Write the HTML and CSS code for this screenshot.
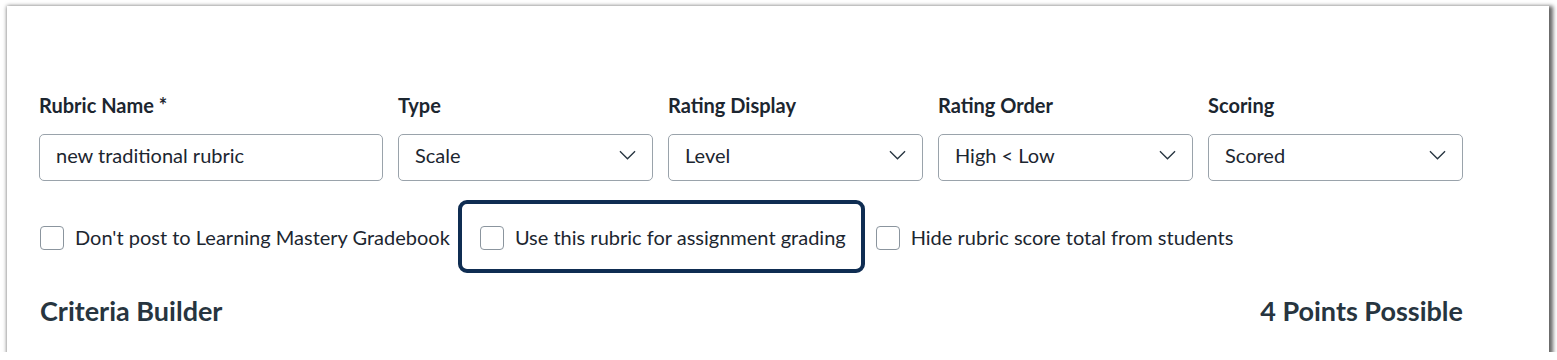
FILE: index.html
```html
<!DOCTYPE html>
<html lang="en">
<head>
    <meta charset="UTF-8">
    <meta name="viewport" content="width=device-width, initial-scale=1.0">
    <title>Rubric Builder</title>
    <link rel="stylesheet" href="styles.css">
</head>
<body>

<div class="card">
    <!-- Rubric settings -->
    <div class="settings-row">
        <div class="field field-name">
            <label for="rubric-name">Rubric Name *</label>
            <input type="text" id="rubric-name" class="text-input" value="new traditional rubric">
        </div>
        <div class="field">
            <label>Type</label>
            <div class="select-box">
                <span>Scale</span>
                <svg class="chevron" viewBox="0 0 18 10"><path d="M1 1l8 8 8-8"/></svg>
            </div>
        </div>
        <div class="field">
            <label>Rating Display</label>
            <div class="select-box">
                <span>Level</span>
                <svg class="chevron" viewBox="0 0 18 10"><path d="M1 1l8 8 8-8"/></svg>
            </div>
        </div>
        <div class="field">
            <label>Rating Order</label>
            <div class="select-box">
                <span>High &lt; Low</span>
                <svg class="chevron" viewBox="0 0 18 10"><path d="M1 1l8 8 8-8"/></svg>
            </div>
        </div>
        <div class="field">
            <label>Scoring</label>
            <div class="select-box">
                <span>Scored</span>
                <svg class="chevron" viewBox="0 0 18 10"><path d="M1 1l8 8 8-8"/></svg>
            </div>
        </div>
    </div>

    <!-- Options -->
    <div class="options-row">
        <label class="option">
            <span class="checkbox"></span>
            Don't post to Learning Mastery Gradebook
        </label>
        <label class="option focused">
            <span class="checkbox"></span>
            Use this rubric for assignment grading
        </label>
        <label class="option">
            <span class="checkbox"></span>
            Hide rubric score total from students
        </label>
    </div>

    <!-- Criteria header -->
    <div class="criteria-header">
        <h2>Criteria Builder</h2>
        <h2>4 Points Possible</h2>
    </div>
</div>

</body>
</html>
```

FILE: styles.css
```css
/* Global Styles */
body {
    font-family: 'Lato', 'Noto Sans', sans-serif;
    background-color: #FFFFFF;
    margin: 0;
    padding: 0;
    color: #273540;
}
.card {
    box-sizing: border-box;
    margin: 6px 8px 0 7px;
    height: 346px;
    padding: 86px 86px 0 32px;
    background-color: #FFF;
    box-shadow: 2px 2px 4px 2px rgba(0, 0, 0, 0.6);
}

/* Settings Row */
.settings-row {
    display: flex;
    gap: 15px;
}
.field {
    display: flex;
    flex-direction: column;
    width: 255px;
}
.field-name {
    width: 344px;
}
.field label {
    font-size: 20px;
    font-weight: bold;
    line-height: 27px;
    margin-bottom: 15px;
    color: #1c2630;
}
.text-input,
.select-box {
    box-sizing: border-box;
    height: 47px;
    border: 1px solid #9aa3ab;
    border-radius: 5px;
    padding: 0 16px 5px;
    font-family: inherit;
    font-size: 20px;
    color: #1c2630;
    background-color: #FFF;
}
.select-box {
    display: flex;
    align-items: center;
    justify-content: space-between;
}
.chevron {
    width: 17px;
    height: 10px;
    fill: none;
    stroke: #273540;
    stroke-width: 1.4;
}

/* Options */
.options-row {
    display: flex;
    gap: 30px;
    margin-top: 43px;
    margin-left: 1px;
}
.option {
    position: relative;
    display: flex;
    align-items: center;
    gap: 11px;
    font-size: 20px;
    line-height: 27px;
    color: #1c2630;
}
.checkbox {
    box-sizing: border-box;
    width: 24px;
    height: 24px;
    border: 1px solid #8b959e;
    border-radius: 4px;
    background-color: #FFF;
}
.focused::after {
    content: "";
    position: absolute;
    top: -24px;
    bottom: -22px;
    left: -22px;
    right: -19px;
    border: 4px solid #0f2d52;
    border-radius: 9px;
}

/* Criteria Header */
.criteria-header {
    display: flex;
    justify-content: space-between;
    margin-top: 44px;
    margin-left: 1px;
}
.criteria-header h2 {
    margin: 0;
    font-size: 27px;
    line-height: 32px;
    font-weight: bold;
    color: #273540;
}
```
